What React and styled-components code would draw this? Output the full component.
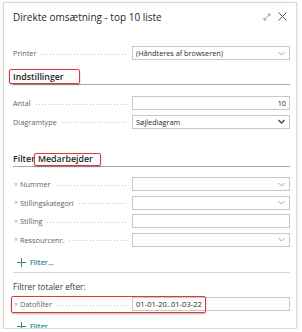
import React from "react";
import styled, { createGlobalStyle } from "styled-components";

const GlobalStyle = createGlobalStyle`
  html, body {
    margin: 0;
    padding: 0;
    background: #ffffff;
  }
  body {
    font-family: "Open Sans", "Noto Sans", sans-serif;
    color: #212121;
  }
`;

const Dialog = styled.div`
  margin: 2px 5px 0 3px;
  height: 327px;
  box-sizing: border-box;
  border: 1px solid #dadada;
  box-shadow: 0 1px 4px rgba(0, 0, 0, 0.12);
  background: #fff;
  overflow: hidden;
  display: flex;
  flex-direction: column;
`;

const Header = styled.div`
  height: 27px;
  flex: none;
  display: flex;
  align-items: center;
  padding: 0 9px 0 9px;
`;

const Title = styled.h1`
  margin: 0;
  flex: 1;
  font-size: 10px;
  font-weight: 400;
  color: #1f1f1f;
  white-space: nowrap;
`;

const HeaderButtons = styled.div`
  display: flex;
  align-items: center;
  gap: 7px;
`;

const Body = styled.div`
  flex: 1;
  padding: 0 6px 0 9px;
`;

const Row = styled.div`
  position: relative;
  display: grid;
  grid-template-columns: 119px 1fr;
  height: 14px;
  margin-top: ${(p) => p.$top ?? 4.5}px;
`;

const Label = styled.div`
  display: flex;
  align-items: center;
  padding-right: 5px;
  font-size: 7.3px;
  color: #5f5f5f;
  white-space: nowrap;
`;

const Remove = styled.span`
  color: #a0a0a0;
  font-size: 7px;
  line-height: 1;
  margin: 0 2px 0 1px;
`;

const Leader = styled.span`
  flex: 1;
  align-self: center;
  height: 1px;
  margin: 2px 0 0 5px;
  background-image: linear-gradient(to right, #c4c4c4 34%, transparent 0);
  background-size: 3px 1px;
  background-repeat: repeat-x;
`;

const Field = styled.div`
  box-sizing: border-box;
  display: flex;
  align-items: center;
  justify-content: ${(p) => (p.$right ? "flex-end" : "flex-start")};
  padding: 0 ${(p) => (p.$right ? 3 : 4)}px 0 3px;
  border: 1px solid #c8c8c8;
  background: #fff;
  font-size: ${(p) => (p.$big ? 7.6 : 7.3)}px;
  color: #2a2a2a;
  white-space: nowrap;
`;

const FieldText = styled.span`
  flex: ${(p) => (p.$right ? "none" : 1)};
`;

const Section = styled.h2`
  margin: ${(p) => p.$top}px 0 0;
  height: 14px;
  line-height: 14px;
  border-bottom: 1px solid #a9a9a9;
  font-size: 8.8px;
  font-weight: 600;
  color: #1f1f1f;
  white-space: nowrap;
`;

const Marked = styled.span`
  position: relative;
  margin-left: ${(p) => p.$gap ?? 0}px;

  &::after {
    content: "";
    position: absolute;
    left: ${(p) => p.$l}px;
    right: ${(p) => p.$r}px;
    top: ${(p) => p.$t}px;
    bottom: ${(p) => p.$b}px;
    border: 1.5px solid #e5343b;
    border-radius: 2px;
    box-shadow: 0 1px 2px rgba(0, 0, 0, 0.3);
  }
`;

const RowMark = styled.div`
  position: absolute;
  left: -2px;
  top: -1px;
  bottom: -2px;
  width: 193px;
  border: 1.5px solid #e5343b;
  border-radius: 2px;
  box-shadow: 0 1px 2px rgba(0, 0, 0, 0.3);
  pointer-events: none;
`;

const AddFilter = styled.div`
  display: flex;
  align-items: center;
  gap: 4px;
  height: 14px;
  margin-top: ${(p) => p.$top}px;
  padding-left: 4px;
  font-size: 7.2px;
  font-weight: 600;
  color: #2e8b8b;
`;

const Divider = styled.div`
  margin-top: 3px;
  border-top: 1px solid #d6d6d6;
`;

const Caption = styled.div`
  margin-top: 7px;
  height: 14px;
  line-height: 14px;
  font-size: 8.2px;
  color: #3a3a3a;
`;

const Chevron = ({ bold }) => (
  <svg width="7" height="5" viewBox="0 0 7 5">
    <path
      d="M0.5 1 L3.5 4 L6.5 1"
      fill="none"
      stroke={bold ? "#444" : "#8a8a8a"}
      strokeWidth={bold ? 1.4 : 0.8}
    />
  </svg>
);

const Plus = () => (
  <svg width="9" height="9" viewBox="0 0 9 9">
    <path d="M4.5 0 V9 M0 4.5 H9" stroke="#2e8b8b" strokeWidth="1" />
  </svg>
);

const ExpandIcon = () => (
  <svg width="8" height="8" viewBox="0 0 8 8">
    <path
      d="M1 7 L7 1 M4.5 1 H7 V3.5 M1 4.5 V7 H3.5"
      fill="none"
      stroke="#8c8c8c"
      strokeWidth="0.8"
    />
  </svg>
);

const CloseIcon = () => (
  <svg width="9" height="9" viewBox="0 0 9 9">
    <path d="M0.5 0.5 L8.5 8.5 M8.5 0.5 L0.5 8.5" stroke="#555" strokeWidth="1" />
  </svg>
);

const FieldRow = ({ label, value, removable, chevron, right, big, top, children }) => (
  <Row $top={top}>
    <Label>
      {removable && <Remove>×</Remove>}
      {label}
      <Leader />
    </Label>
    <Field $right={right} $big={big}>
      <FieldText $right={right}>{value}</FieldText>
      {chevron && <Chevron bold={chevron === "bold"} />}
    </Field>
    {children}
  </Row>
);

const App = () => {
  return (
    <>
      <GlobalStyle />
      <Dialog>
        <Header>
          <Title>Direkte omsætning - top 10 liste</Title>
          <HeaderButtons>
            <ExpandIcon />
            <CloseIcon />
          </HeaderButtons>
        </Header>
        <Body>
          <FieldRow top={16} label="Printer" value="(Håndteres af browseren)" chevron="thin" />

          <Section $top={10}>
            <Marked $l={-4} $r={-16} $t={-2} $b={-1}>
              Indstillinger
            </Marked>
          </Section>
          <FieldRow top={11} label="Antal" value="10" right />
          <FieldRow label="Diagramtype" value="Søjlediagram" chevron="bold" />

          <Section $top={23.5}>
            Filter
            <Marked $gap={3} $l={-4} $r={-8} $t={0} $b={-1}>
              Medarbejder
            </Marked>
          </Section>
          <FieldRow top={10} label="Nummer" removable chevron="thin" />
          <FieldRow label="Stillingskategori" removable chevron="thin" />
          <FieldRow label="Stilling" removable />
          <FieldRow label="Ressourcenr." removable chevron="thin" />
          <AddFilter $top={8.5}>
            <Plus />
            Filter...
          </AddFilter>

          <Divider />
          <Caption>Filtrer totaler efter:</Caption>
          <FieldRow top={3} label="Datofilter" value="01-01-20..01-03-22" removable big>
            <RowMark />
          </FieldRow>
          <AddFilter $top={8}>
            <Plus />
            Filter
          </AddFilter>
        </Body>
      </Dialog>
    </>
  );
};

export default App;
